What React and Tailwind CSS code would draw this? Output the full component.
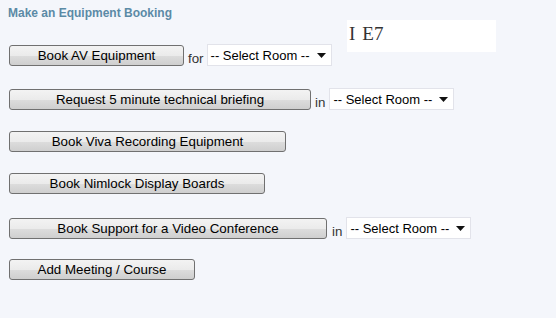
import React from "react";

const font = { fontFamily: '"Liberation Sans", Arial, sans-serif' };

function Btn({ w, children }) {
  return (
    <div
      className={`${w} h-[21px] shrink-0 flex items-center justify-center rounded-[3px] border border-[#707070] bg-[linear-gradient(#f3f3f3_0%,#ebebeb_50%,#dddddd_51%,#cfcfcf_100%)] text-[13.33px] leading-none text-black`}
    >
      {children}
    </div>
  );
}

function Sel() {
  return (
    <div className="w-[125px] h-[22px] shrink-0 flex items-center justify-between border border-[#e2e3ea] bg-white pl-[3px] pr-[4px] text-[13px] leading-none text-black">
      <span>-- Select Room --</span>
      <svg width="9" height="5" viewBox="0 0 9 5" className="mr-[1px]">
        <polygon points="0,0 9,0 4.5,5" fill="#111" />
      </svg>
    </div>
  );
}

export default function App() {
  return (
    <div className="w-[556px] h-[318px] bg-[#f4f6fb] pl-[8px] overflow-hidden" style={font}>
      <div className="flex">
        <div className="w-[339px] shrink-0">
          <div className="pt-[6px] text-[12px] font-bold leading-[14px] text-[#5b8aa6]">
            Make an Equipment Booking
          </div>
          <div className="mt-[24px] ml-px flex items-end h-[22px]">
            <Btn w="w-[175px]">Book AV Equipment</Btn>
            <span className="ml-[4px] mr-[3px] text-[13.33px] leading-[14px] text-[#333]">for</span>
            <Sel />
          </div>
        </div>
        <div className="mt-[20px] w-[149px] h-[32px] bg-white pl-[2px] pt-[1px] text-[19px] leading-[26px] text-[#333] flex items-start" style={{ fontFamily: '"Liberation Serif", "Times New Roman", serif' }}>
          <span>I</span>
          <span className="inline-block w-[7px]" />
          <span>E7</span>
        </div>
      </div>

      <div className="mt-[22px] ml-px flex items-end h-[22px]">
        <Btn w="w-[302px]">Request 5 minute technical briefing</Btn>
        <span className="ml-[4px] mr-[4px] text-[13.33px] leading-[14px] text-[#333]">in</span>
        <Sel />
      </div>

      <div className="mt-[21px] ml-px flex items-start h-[22px]">
        <Btn w="w-[277px]">Book Viva Recording Equipment</Btn>
      </div>

      <div className="mt-[20px] ml-px flex items-start h-[22px]">
        <Btn w="w-[256px]">Book Nimlock Display Boards</Btn>
      </div>

      <div className="mt-[22px] ml-px flex items-end h-[22px]">
        <Btn w="w-[318px]">Book Support for a Video Conference</Btn>
        <span className="ml-[5px] mr-[4px] text-[13.33px] leading-[14px] text-[#333]">in</span>
        <Sel />
      </div>

      <div className="mt-[20px] ml-px flex items-start h-[22px]">
        <Btn w="w-[186px]">Add Meeting / Course</Btn>
      </div>
    </div>
  );
}
